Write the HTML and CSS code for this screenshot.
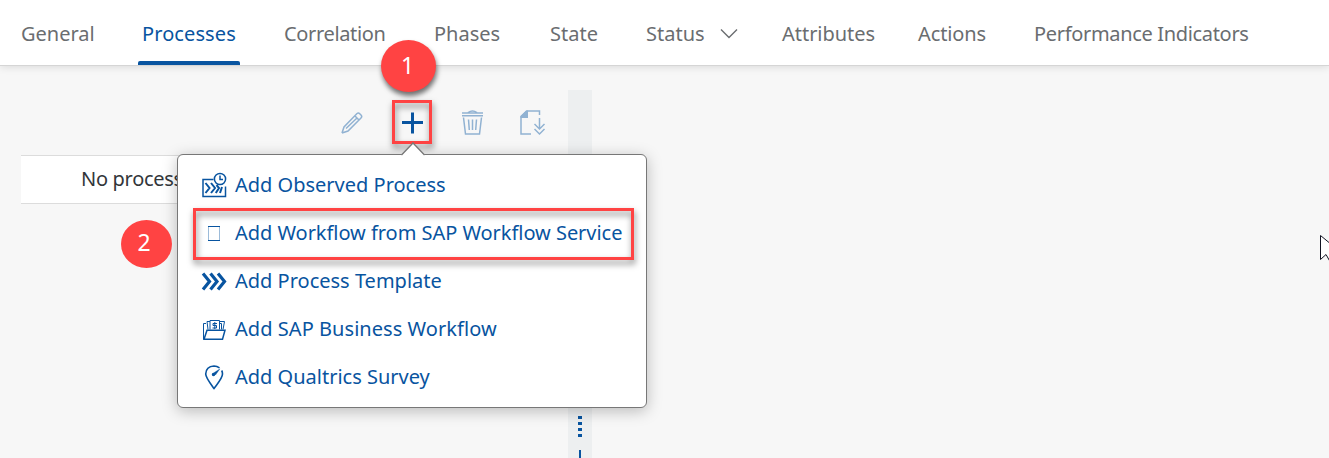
FILE: index.html
```html
<!DOCTYPE html>
<html lang="en">
<head>
<meta charset="utf-8">
<title>Processes</title>
<link rel="stylesheet" href="styles.css">
</head>
<body>
<nav class="tabs">
  <a class="tab general">General</a>
  <a class="tab processes active">Processes</a>
  <a class="tab correlation">Correlation</a>
  <a class="tab phases">Phases</a>
  <a class="tab state">State</a>
  <a class="tab status">Status
    <svg class="chevron" width="18" height="12" viewBox="0 0 18 12"><path d="M1 1.500 9 9.500 17 1.500"/></svg>
  </a>
  <a class="tab attributes">Attributes</a>
  <a class="tab actions">Actions</a>
  <a class="tab indicators">Performance Indicators</a>
</nav>
<main class="content">
  <section class="list">
    <div class="toolbar">
      <svg class="tool" viewBox="0 0 28 28"><path d="M4 24 6 18 19 4.500Q20.500 3.500 22 5L23 6Q24.500 7.500 23 9L10 22 4 24M17 7 21 11M8 19.500 19 9"/></svg>
      <svg class="tool plus" viewBox="0 0 28 28"><path d="M14.500 3.500V24.500M4 13.500H25"/></svg>
      <svg class="tool" viewBox="0 0 28 28"><path d="M4 4H25M4 6.800H25M10 3.500Q14.500 .500 19 3.500M5.500 8.500 7.500 25H21.500L23.500 8.500M10.500 10.500 11.300 21M14.500 10.500V21M18.500 10.500 17.700 21"/></svg>
      <svg class="tool" viewBox="0 0 28 28"><path d="M13 25H3V7.500L9 2H21.500V6M21.500 9V20.500M16.500 15 21.500 20 26.500 15M16.500 20 21.500 25 26.500 20"/><path class="fill" d="M2.500 9V7L8 1.500H10V9Z"/></svg>
    </div>
    <div class="empty-row">No processes</div>
  </section>
  <div class="splitter">
    <i class="dot"></i><i class="dot"></i><i class="dot"></i><i class="dot"></i>
    <i class="bar"></i>
  </div>
</main>
<div class="mark mark-plus"></div>
<div class="popover">
  <svg class="arrow" width="26" height="14" viewBox="0 0 26 14"><path d="M1.500 13 13 1 24.500 13V14H1.500Z" fill="#fff"/><path d="M1.500 13 13 1 24.500 13" fill="none" stroke="#777" stroke-width="1.300"/></svg>
  <button class="item observed"><svg class="icon" viewBox="0 0 26 26"><path d="M12.500 7.500H2V24.500H24.500V14.500"/><path stroke-width="2" d="M4.500 11 8.500 16 4.500 21M10 11 14 16 10 21M15.500 13 18 16 14.800 21M21 15 19 21"/><circle cx="19" cy="7" r="5.600"/><path d="M19 3.500V7.500H22"/></svg><span>Add Observed Process</span></button>
  <button class="item service"><svg class="icon" viewBox="0 0 26 26"><path stroke-width="1" d="M7 6.500H19M7 20.500H19"/><path stroke-width="1" opacity=".4" d="M7.500 6V21M18.500 6V21"/></svg><span>Add Workflow from SAP Workflow Service</span></button>
  <button class="item template"><svg class="icon" viewBox="0 0 26 26"><path stroke-width="3.200" d="M2 5.500 8.500 13.500 2 21.500M9.500 5.500 16 13.500 9.500 21.500M17 5.500 23.500 13.500 17 21.500"/></svg><span>Add Process Template</span></button>
  <button class="item business"><svg class="icon" viewBox="0 0 26 26"><path stroke-width="1.500" d="M3 23.200 6 14.200H24L21.500 23.200Z"/><path stroke-width="1" d="M2.500 23V7.500H5M7 13.500 6 5.500H9M9 13.500V4.500H18.500V13.500M18.500 5.500H23.500L22 13.500M18.500 7.500H20.500V13.500"/><path stroke-width="1" d="M16 7.500H12V9.500H15.500V12H11.500M13.800 6V13"/></svg><span>Add SAP Business Workflow</span></button>
  <button class="item survey"><svg class="icon" viewBox="0 0 26 26"><path stroke-width="1.600" d="M18.500 3.800Q16 2 13 2Q5 2.500 4.700 10C4.700 13.500 9 19 13 24.500C17 19 21.500 14 21.500 10Q21.500 8 20.700 6.500"/><circle class="solid" cx="12.500" cy="10.500" r="1"/><path class="solid" stroke-width=".3" d="M12.500 9 19 4.800 14.500 11Z"/></svg><span>Add Qualtrics Survey</span></button>
</div>
<div class="mark mark-service"></div>
<div class="badge badge-one">1</div>
<div class="badge badge-two">2</div>
<svg class="cursor" width="9" height="32" viewBox="0 0 9 32"><path d="M.500 .500V24.500L6 19.500 12 30V10Z" fill="#fff" stroke="#111322"/></svg>
</body>
</html>
```
FILE: styles.css
```css
* { box-sizing: border-box; }
body {
  margin: 0; height: 458px; overflow: hidden; position: relative;
  background: #f7f7f7; color: #32363a;
  font: 20px/28px "Noto Sans", "Open Sans", sans-serif;
}
.tabs {
  display: flex; gap: 48px; height: 66px; padding-left: 21px;
  background: #fff; border-bottom: 1px solid #d5d5d5;
  box-shadow: 0 1px 8px rgba(0,0,0,.12); position: relative;
}
.tab { flex: none; height: 65px; padding-top: 20px; color: #6a6d70; white-space: nowrap; position: relative; }
.active { color: #0854a0; }
.active::after {
  content: ""; position: absolute; left: -4px; right: -3px; bottom: 0; height: 4px;
  border-radius: 2px 2px 0 0; background: #0854a0;
}
.general { width: 73px; }
.processes { width: 95px; letter-spacing: .1px; }
.correlation { width: 102px; letter-spacing: -.35px; text-indent: -1px; }
.phases { width: 67px; text-indent: -1px; }
.state { width: 48px; }
.status { width: 88px; display: flex; gap: 15px; }
.attributes { width: 89px; letter-spacing: -.03px; }
.actions { width: 68px; letter-spacing: -.1px; text-indent: -1px; }
.indicators { letter-spacing: -.33px; text-indent: -1px; }
.chevron { flex: none; margin-top: 8px; fill: none; stroke: #6a6d70; stroke-width: 1.400; }
.content { display: flex; height: 392px; padding: 24px 0 0 21px; }
.list { width: 527px; margin-right: 20px; }
.toolbar { display: flex; justify-content: flex-end; gap: 32px; height: 65px; padding-top: 19px; padding-right: 2px; }
.tool { width: 28px; height: 28px; fill: none; stroke: #91b2d2; stroke-width: 1.500; }
.tool .fill { fill: #91b2d2; stroke: none; }
.plus { stroke: #0854a0; stroke-width: 3; }
.empty-row { height: 49px; padding: 9px 0 0 60px; background: #fff; border: 1px solid #dcdcdc; border-width: 1px 0; letter-spacing: -.3px; }
.splitter { width: 24px; background: #edeff0; padding-top: 326px; display: flex; flex-direction: column; align-items: center; gap: 3px; }
.dot { flex: none; width: 4px; height: 3px; background: #0854a0; }
.bar { flex: none; width: 2px; height: 8px; margin-top: 10px; background: #0854a0; }
.popover {
  position: absolute; left: 177px; top: 154px; width: 470px; height: 254px;
  padding: 6px 0; background: #fff; border: 1px solid #777; border-radius: 6px;
  box-shadow: 0 3px 15px rgba(0,0,0,.25);
}
.arrow { position: absolute; left: 222px; top: -13px; }
.item {
  display: flex; align-items: center; gap: 8px; width: 100%; height: 48px; padding: 0 0 0 23px;
  border: 0; background: none; color: #0854a0; font: inherit; text-align: left; white-space: nowrap;
}
.service { letter-spacing: -.04px; }
.business { letter-spacing: .05px; }
.icon { flex: none; width: 26px; height: 26px; fill: none; stroke: #0854a0; stroke-width: 1.500; }
.solid { fill: #0854a0; }
.mark { position: absolute; border: 3px solid #ff4343; filter: drop-shadow(1px 4px 3px rgba(0,0,0,.5)); }
.mark-plus { left: 392px; top: 100px; width: 40px; height: 44px; }
.mark-service { left: 193px; top: 208px; width: 441px; height: 52px; }
.badge { position: absolute; display: flex; justify-content: center; border-radius: 50%; background: #ff4343; color: #fff; font-size: 23px; }
.badge-one { left: 381px; top: 40px; width: 55px; height: 52px; padding: 11px 2px 0 0; box-shadow: 1px 4px 5px rgba(0,0,0,.55); }
.badge-two { left: 121px; top: 220px; width: 51px; height: 48px; padding: 8px 5px 0 0; }
.cursor { position: absolute; left: 1320px; top: 235px; }
```
